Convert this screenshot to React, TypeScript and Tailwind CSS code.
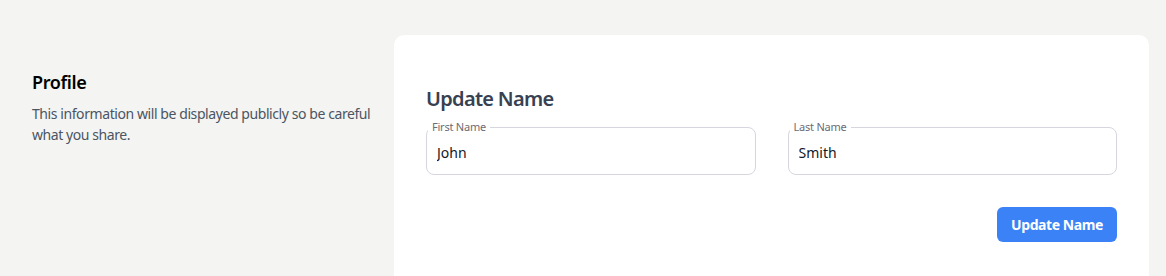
import React from "react";

function Field({ label, value }: { label: string; value: string }) {
  return (
    <fieldset className="border border-[#d6d6de] rounded-[8px] h-[54px] px-[1px] m-0 min-w-0">
      <legend className="text-[11px] leading-[12px] text-[#6b6b75] px-[4px] tracking-[-0.02em]">{label}</legend>
      <input
        readOnly
        value={value}
        className="w-full outline-none bg-transparent text-[14px] leading-[20px] text-[#111827] pl-[9px] pr-[6px] mt-[10px]"
        style={{ fontFamily: "inherit" }}
      />
    </fieldset>
  );
}

export default function App() {
  return (
    <div
      className="w-[1166px] h-[276px] bg-[#f4f4f2] flex pt-[35px] pl-[32px] overflow-hidden"
      style={{ fontFamily: '"Noto Sans", "Open Sans", sans-serif' }}
    >
      <div className="w-[345px] mr-[17px] pt-[34px]">
        <h2 className="text-[18px] leading-[26px] font-semibold text-black tracking-[-0.02em]">Profile</h2>
        <p className="mt-[8px] text-[14px] leading-[21px] text-[#4b5563] tracking-[-0.03em]">
          This information will be displayed publicly so be careful what you share.
        </p>
      </div>
      <div className="w-[755px] bg-white rounded-t-[10px] px-[32px] pt-[50px]">
        <h3 className="text-[20px] leading-[28px] font-semibold text-[#374151] tracking-[-0.035em]">Update Name</h3>
        <div className="grid grid-cols-2 gap-[32px] mt-[8px]">
          <Field label="First Name" value="John" />
          <Field label="Last Name" value="Smith" />
        </div>
        <div className="flex justify-end mt-[32px]">
          <button className="w-[120px] h-[35px] bg-[#3b82f6] rounded-[6px] text-white text-[14px] font-bold tracking-[-0.03em]">
            Update Name
          </button>
        </div>
      </div>
    </div>
  );
}
